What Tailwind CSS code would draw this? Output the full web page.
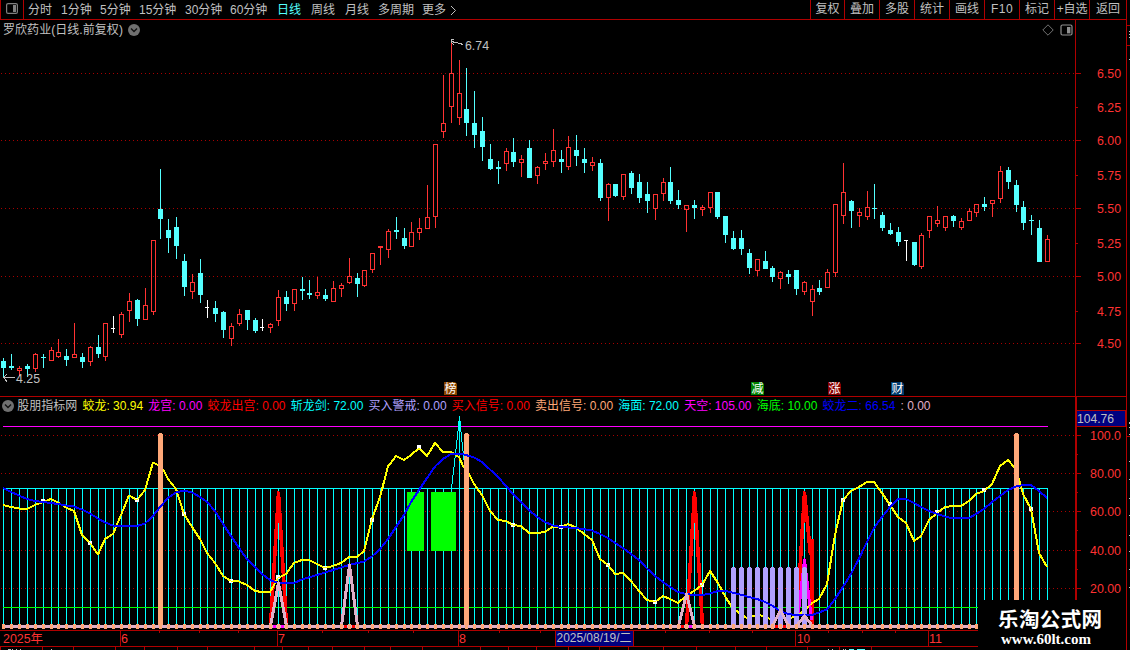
<!DOCTYPE html>
<html lang="zh-CN">
<head>
<meta charset="utf-8">
<title>罗欣药业 日线</title>
<script src="https://cdn.jsdelivr.net/npm/@tailwindcss/browser@4"></script>
</head>
<body class="bg-black overflow-hidden">
<div class="flex w-[1130px] h-[650px] bg-black overflow-hidden text-[12px] leading-none text-[#c0c0c0] font-['Liberation_Sans','Noto_Sans_CJK_SC',sans-serif]">
  <main class="flex flex-col w-[1127px] shrink-0 border-r border-[#b00000]">
    <header class="flex h-[20px] shrink-0 border-b border-[#b00000] whitespace-nowrap">
      <div class="flex w-[24px] shrink-0 justify-center pt-[3px] border-x border-[#b00000]">
        <svg class="w-[12px] h-[11px]" viewBox="0 0 12 11"><rect x=".6" y=".6" width="10.8" height="9.8" rx="1.5" fill="none" stroke="#808080" stroke-width="1.2"/><rect x="7" y="2" width="3" height="7" fill="#808080"/></svg>
      </div>
      <nav class="flex items-center w-[786px] pl-[4px] pt-[1px] shrink-0">
        <span class="w-[33px]">分时</span><span class="w-[39px]">1分钟</span><span class="w-[39px]">5分钟</span><span class="w-[46px]">15分钟</span><span class="w-[45px]">30分钟</span><span class="w-[47px]">60分钟</span><span class="w-[34px] text-[#54ffff]">日线</span><span class="w-[34px]">周线</span><span class="w-[33px]">月线</span><span class="w-[44px]">多周期</span><span class="w-[28px]">更多</span>
        <svg class="w-[8px] h-[11px]" viewBox="0 0 8 11"><path d="M1 1L5.5 5.5L1 10" fill="none" stroke="#c0c0c0"/></svg>
      </nav>
      <div class="flex h-[19px] text-center leading-[19px]">
        <span class="w-[34px] border-l border-[#b00000]">复权</span><span class="w-[35px] border-l border-[#b00000]">叠加</span><span class="w-[35px] border-l border-[#b00000]">多股</span><span class="w-[35px] border-l border-[#b00000]">统计</span><span class="w-[35px] border-l border-[#b00000]">画线</span><span class="w-[35px] border-l border-[#b00000] tracking-[0.5px]">F10</span><span class="w-[35px] border-l border-[#b00000]">标记</span><span class="w-[35px] border-l border-[#b00000] tracking-[-0.2px]">+自选</span><span class="w-[37px] border-l border-[#b00000]">返回</span>
      </div>
    </header>
    <div class="flex h-[18px] shrink-0">
      <div class="flex items-center w-[1076px] border-r border-[#b00000] pl-[3px] pt-[1px] whitespace-nowrap">
        <h1 class="w-[125px] tracking-[0.05px]">罗欣药业(日线.前复权)</h1>
        <svg class="w-[12px] h-[12px]" viewBox="0 0 12 12"><circle cx="6" cy="6" r="6" fill="#707070"/><path d="M3 4.5L6 7.5L9 4.5" fill="none" stroke="#111" stroke-width="1.4"/></svg>
        <svg class="ml-auto w-[33px] h-[12px]" viewBox="0 0 33 12"><path d="M.8 6L6 .8L11.2 6L6 11.2Z" fill="none" stroke="#808080" stroke-width=".9"/><rect x="19" y="1" width="11" height="10" rx="1.5" fill="none" stroke="#909090" stroke-width="1.2"/><rect x="25" y="3" width="3.4" height="6.4" fill="#909090"/></svg>
      </div>
    </div>
    <svg id="price" class="block w-[1126px] h-[358px] shrink-0" viewBox="0 38 1126 358"></svg>
    <div class="flex h-[20px] shrink-0 border-t border-[#b00000]">
      <div class="flex items-center gap-[5.2px] w-[1077px] border-r-2 border-[#b00000] pl-[2px] pb-[1px] whitespace-nowrap">
        <svg class="w-[12px] h-[12px] -mr-[2px]" viewBox="0 0 12 12"><circle cx="6" cy="6" r="6" fill="#707070"/><path d="M3 4.5L6 7.5L9 4.5" fill="none" stroke="#111" stroke-width="1.4"/></svg>
        <span>股朋指标网</span>
        <span class="text-[#ffff00]">蛟龙: 30.94</span>
        <span class="text-[#ff00ff]">龙宫: 0.00</span>
        <span class="text-[#ff0000]">蛟龙出宫: 0.00</span>
        <span class="text-[#00ffff]">斩龙剑: 72.00</span>
        <span class="text-[#b0a0ff]">买入警戒: 0.00</span>
        <span class="text-[#ff0000]">买入信号: 0.00</span>
        <span class="text-[#ffa878]">卖出信号: 0.00</span>
        <span class="text-[#00ffff]">海面: 72.00</span>
        <span class="text-[#ff00ff]">天空: 105.00</span>
        <span class="text-[#00ff00]">海底: 10.00</span>
        <span class="text-[#0000ff]">蛟龙二: 66.54</span>
        <span class="text-[#e0b0c8]">: 0.00</span>
      </div>
    </div>
    <svg id="indicator" class="block w-[1126px] h-[234px] shrink-0 overflow-visible" viewBox="0 416 1126 234"></svg>
  </main>
  <aside class="w-[3px] shrink-0">
    <svg id="edge" class="block w-[3px] h-[650px]" viewBox="1127 0 3 650"></svg>
  </aside>
</div>
<script>
const NS='http://www.w3.org/2000/svg', FRAME='#b00000';
let host;
const add=(t,a,txt)=>{const e=document.createElementNS(NS,t);for(const k in a)e.setAttribute(k,a[k]);if(txt)e.textContent=txt;host.appendChild(e);return e;};
const R=(x,y,w,h,f)=>add('rect',{x,y,width:w,height:h,fill:f,'shape-rendering':'crispEdges'});
const L=(pts,c,w)=>add('polyline',{points:pts,fill:'none',stroke:c,'stroke-width':w,'stroke-linejoin':'round','shape-rendering':'crispEdges'});
const T=(x,y,s,c,len,size)=>{const a={x,y,fill:c,'font-size':size||12.5};if(len){a.textLength=len;a.lengthAdjust='spacingAndGlyphs';}return add('text',a,s);};
const X=i=>Math.floor(3.95+7.846*i);
const dots=(y,end)=>add('line',{x1:1,x2:end,y1:y+.5,y2:y+.5,stroke:'#a80000','stroke-dasharray':'1 3','shape-rendering':'crispEdges'});

// type, wick top, body top, body bottom, wick bottom
const K=`c358,361,368,378 c354,366,368,370 r366,368,371,376 c364,366,369,377 r353,354,369,372 c354,357,358,368 r347,350,361,361 r339,352,357,358 c349,356,360,366 r323,354,358,358
c353,357,362,368 r346,347,362,366 c335,347,354,358 r323,323,357,361 w316,328,329,333 r312,314,335,338 r293,301,311,322 c299,300,319,326 r288,305,320,320 r240,240,312,315
c169,209,219,239 c219,230,238,253 c217,227,246,259 c254,261,287,296 r274,282,292,299 c259,273,295,303 w300,307,308,318 c301,308,314,322 c311,312,330,338 r323,326,339,346
r309,314,324,326 c310,310,320,330 c318,320,331,333 w319,327,328,331 r323,324,328,333 r290,297,321,326 c291,297,304,311 r289,289,304,311 c277,289,291,300 c280,293,295,299
r277,292,296,299 c289,295,299,301 r281,288,302,302 r283,285,289,297 r258,276,283,284 c273,278,284,297 r270,270,286,287 r253,253,270,273 r246,246,248,265 r229,231,250,258
c217,230,232,239 c228,238,246,249 r222,232,247,247 r218,228,233,240 r185,217,229,229 r144,144,217,228 r75,123,132,138 r43,73,107,123 r60,93,118,125 c68,109,123,136
c91,123,135,148 c117,131,147,161 c144,159,169,170 c161,167,169,184 r148,151,164,171 c138,152,162,167 r155,159,163,177 c140,148,178,178 r166,167,176,184 r153,161,164,170
r129,150,162,167 c150,159,162,173 r136,147,167,170 c135,150,156,166 c148,159,163,173 r157,162,166,171 c159,163,198,201 r183,184,198,221 c184,184,196,197 r174,174,197,200
c171,173,188,194 c174,182,198,203 c182,194,201,213 r194,194,209,220 r178,182,194,201 c167,182,201,204 c190,200,205,209 r205,205,210,232 c200,205,208,219 r205,207,210,216
r192,192,208,213 c192,192,217,219 c216,216,235,243 c231,238,249,250 c230,238,249,255 c249,253,268,274 r259,259,271,276 c251,261,269,269 c266,268,277,282 r271,272,279,289
c270,274,277,284 c270,270,289,295 r281,282,292,295 r285,289,302,316 c280,288,292,295 r269,272,288,288 r204,204,273,277 r163,192,216,224 c200,201,211,228 r208,212,216,227
r191,207,217,220 c184,208,209,219 c212,215,228,231 c223,230,234,235 c227,232,242,246 w240,240,241,261 c242,242,265,266 r233,235,267,269 r216,216,231,238 r206,220,224,227
r216,216,228,231 c215,216,221,227 r218,221,228,230 r208,211,221,221 r204,204,213,217 c197,204,207,211 r200,200,204,217 r166,171,199,203 c167,170,182,189 c180,185,205,212
c201,207,223,230 c215,220,221,235 c220,228,262,262 r235,239,262,262`.split(/\s+/);

// ---- price panel ----
host=document.getElementById('price');
[73,140,208,276,343].forEach(y=>dots(y,1075));
R(1075,38,1,358,FRAME);
[['6.50',73],['6.25',107],['6.00',140],['5.75',175],['5.50',208],['5.25',243],['5.00',276],['4.75',311],['4.50',343]].forEach(([s,y],i)=>{
  R(1076,y,i%2?2:5,1,FRAME);T(1097,y+5,s,'#ff3232',24);});
K.forEach((k,i)=>{const x=X(i),[a,b,c,d]=k.slice(1).split(',').map(Number),t=k[0];
  if(t==='r'){const f='#ff3232';R(x,a,1,b-a,f);R(x,c,1,d-c,f);
    if(c-b<3)R(x-2,b,5,c-b,f);else add('rect',{x:x-1.5,y:b+.5,width:4,height:c-b-1,fill:'none',stroke:f,'shape-rendering':'crispEdges'});
  }else{const f=t==='w'?'#ffffff':'#54ffff';R(x,a,1,d-a,f);R(x-2,b,t==='w'?4:5,c-b,f);}});
L('463,44.5 460,43.5 456,42.5 451,41.5','#c0c0c0',1);L('454,39.5 451.5,40 451.5,42 453.5,45','#c0c0c0',1);
T(465,50,'6.74','#c0c0c0',24);
L('3,377.5 15,377.5','#c0c0c0',1);L('7,374 3.5,377.5 7,381.5','#c0c0c0',1);
T(16,383,'4.25','#c0c0c0',24);
[['榜',444,'#884400'],['减',751,'#008000'],['涨',828,'#880000'],['财',891,'#003c70']].forEach(([s,x,c])=>{
  add('path',{d:`M${x} 382h11l2 2v11h-13z`,fill:c});T(x+.5,393,s,'#ffffff',0,12);});

// ---- indicator panel ----
host=document.getElementById('indicator');
[435,473,511,550,588].forEach(y=>dots(y,1075));
R(3,426,1045,1,'#ff00ff');
for(let i=0;i<134;i++)R(X(i),488,1,137,'#00ffff');
R(3,488,1045,1,'#00ffff');
R(3,607,1045,1,'#00ff00');
R(407,492,17,59,'#00ff00');R(431,492,25,59,'#00ff00');
L('451.5,489 459.5,418 464.5,465','#00ffff',1);R(459,416,1,72,'#00ffff');R(458,421,3,9,'#00ffff');
L('270.5,626 278.5,493 286.5,626','#ff0000',3.6);
L('686.5,626 694.5,493 702.5,626','#ff0000',3.6);
L('796.5,626 804.5,493 810.5,555','#ff0000',3.6);R(810,540,4,85,'#ff0000');R(811,539,3,1,'#ff0000');
[278,694,804].forEach(x=>{R(x-1,492,3,20,'#ff0000');R(x,536,1,88,'#00ffff');});
const yellow='3,505 11,507 19,508.5 27,509 35,505 43,502 51,499 58,502.5 66,507.5 74,511 82,535 90,543 98,554.5 105,539 113,534 121,515 129,495.5 137,500 145,490 153,462.5 160,466 164,471 168,479 176,489 184,514 192,527 200,539 207,553 215,563 223,576 231,581 239,581.5 247,585 255,591 262,592 270,592 278,578 286,574 294,563 302,560 309,560 317,564 325,568 333,566 341,563 349,557 357,557 364,551 372,519 380,497 388,466.5 396,456 404,460 411,455 419,448 427,456 435,443 443,452 451,452 459,457 463,466 469,474 474,484 482,495 490,511 498,520 506,521 513,525 521,526 529,533 537,533 545,532 553,526.5 561,527 568,524 576,527.5 584,534 592,540 600,559 608,565 615,574 623,573 631,581 639,591 647,600 655,602 663,596 670,599 678,603 686,596 694,591 702,585 710,571 718,583 726,598 732,607 739,613 747,618 754,616 760,615 770,619 780,618 788,619 796,616 804,611 812,603 819,599 827,584 835,535 843,500 851,491 859,487 867,482 874,482 882,493 890,505 898,517 906,523 914,541 921,536 929,520 937,513 945,507 953,506 961,506 969,501 976,494 984,491 992,484 1000,466 1008,460 1014,467 1019,479 1023,494 1031,509 1039,553 1047,567';
L(yellow,'#ffff00',2);
L('797.5,620 804.5,560 811.5,620','#ff00ff',3);
[[43,501],[90,543],[137,500],[184,514],[231,581],[278,577],[325,568],[372,520],[419,447],[513,525],[561,527],[608,565],[655,602],[702,585],[843,500],[890,504],[937,512],[984,490],[1031,509]].forEach(([x,y])=>R(x-2,y-2,4,4,'#ffffff'));
L(yellow,'#ffff00',1);
[160,466,1016].forEach(x=>{R(x-2,434,5,191,'#ffa878');R(x-1,433,3,1,'#ffa878');});
// warning bars sit in front of the fast line
for(let i=93;i<103;i++){R(X(i)-2,568,5,57,'#b0a0ff');R(X(i)-1,567,3,1,'#b0a0ff');}
L('3,488 11,492 19,495.5 27,499 35,501 43,502 51,503 58,504 66,505.5 74,506.5 82,509.5 90,513.5 98,518.5 105,522.5 113,525.5 121,526.5 137,526 145,523.5 153,516 160,507 168,498 176,492.5 184,490.5 192,492.5 200,497 207,502 215,511 223,524 231,536 239,548 247,559 255,567 262,574 270,580 278,583 294,583 302,579.5 317,575 333,570 349,565 364,561.5 372,556.5 380,549 388,539 396,527 404,515 411,502 419,490 427,478 435,466.5 443,459 451,454 459,453.5 466,455 474,457.5 482,462 490,469.5 498,477 506,486 513,494 521,502 529,510 537,517 545,522 553,525.5 561,527 576,528 592,530.5 600,534 608,538 615,543 623,548 631,554 639,560 647,568.5 655,576 663,582 670,587 678,592 686,594 694,595 702,595 710,593.5 718,591 726,591 734,593 742,595 749,597 757,599 765,602 773,606 780,611 788,614 796,615 812,615 819,612.5 827,609.5 835,599 843,587 851,574 859,558.5 867,542 874,528 882,517 890,507 898,499 906,499 914,503 921,507 929,511 937,514 945,516.5 953,518.5 969,518 976,514 984,509 992,502 1000,496 1008,490 1016,486.5 1023,485 1031,485 1039,491 1047,498','#0000ff',2);
R(2,625,1045,3,'#e0b0c8');
[[273,'#ff00ff'],[281,'#ff00ff'],[344,'#ff0000'],[352,'#ff0000'],[681,'#ff0000'],[689,'#ff00ff'],[775,'#ff0000'],[783,'#ff0000']].forEach(([x,c])=>R(x,625,3,3,c));
[[278,583],[349,565],[686,594],[780,610],[804,616]].forEach(([x,y])=>L(`${x-7.5},626 ${x+.5},${y} ${x+8.5},626`,'#e0b0c8',3));
for(let i=0;i<134;i++)R(X(i)-1,624,3,5,'#ffa878');

// right axis
R(1075,416,2,214,FRAME);
R(1077,410,49,17,FRAME);R(1077,411,48,15,'#000080');
[['100.0',435,1090],['80.00',473,1090],['60.00',511,1090],['40.00',550,1090],['20.00',588,1090]].forEach(([s,y,x])=>{
  R(1077,y,4,1,FRAME);R(1077,y+19,1,1,FRAME);T(x,y+5,s,'#ff3232',31);});
T(1077,422.5,'104.76','#c0c0c0',37);

// time axis
R(0,630,1126,1,FRAME);R(0,646,1126,1,FRAME);
[120,277,458,795,928].forEach(x=>R(x,630,1,16,FRAME));
[159,199,238,322,368,413,499,540,665,709,752,828,862,895].forEach(x=>R(x,631,1,2,FRAME));
[0,42,73,115,144,177,207,254,282,308,332,364,390,422,480,508,536,568,599,628,663,696,735,766,807,839,871].forEach(x=>R(x,647,1,3,FRAME));
R(555,630,79,17,FRAME);R(556,631,77,15,'#000080');
T(3,643,'2025年','#ff3232',40);T(121,643,'6','#ff3232');T(278,643,'7','#ff3232');T(459,643,'8','#ff3232');
T(797,643,'10','#ff3232',13);T(929,643,'11','#ff3232',13);
T(556.5,642,'2025/08/19/二','#c0c0c0',75);
[[8,3],[12,1],[16,1],[20,1],[51,1],[828,1],[832,1],[843,1],[845,1]].forEach(([x,w])=>R(x,649,w,1,'#c0c0c0'));R(849,649,5,1,'#54ffff');R(857,649,8,1,'#54ffff');

// site mark
R(978,600,148,50,'#000000');
add('text',{x:998,y:627,fill:'#fff','font-size':20.5,'font-weight':700,textLength:104,'font-family':"'Noto Sans CJK SC',sans-serif"},'乐淘公式网');
add('text',{x:1001,y:644,fill:'#fff','font-size':14,'font-weight':700,textLength:90,lengthAdjust:'spacingAndGlyphs','font-family':"'Liberation Serif',serif"},'www.60lt.com');

// neighbouring panel edge
host=document.getElementById('edge');
[25,45,436].forEach(y=>R(1127,y,3,1,FRAME));
R(1126,600,4,50,'#000000');
[[31,1],[34,1],[37,1],[59,1],[422,2],[427,1],[434,1],[461,1],[479,1],[498,1],[515,1],[535,1],[551,1],[569,1],[587,1]].forEach(([y,h])=>R(1129,y,1,h,'#c0c0c0'));
</script>
</body>
</html>
